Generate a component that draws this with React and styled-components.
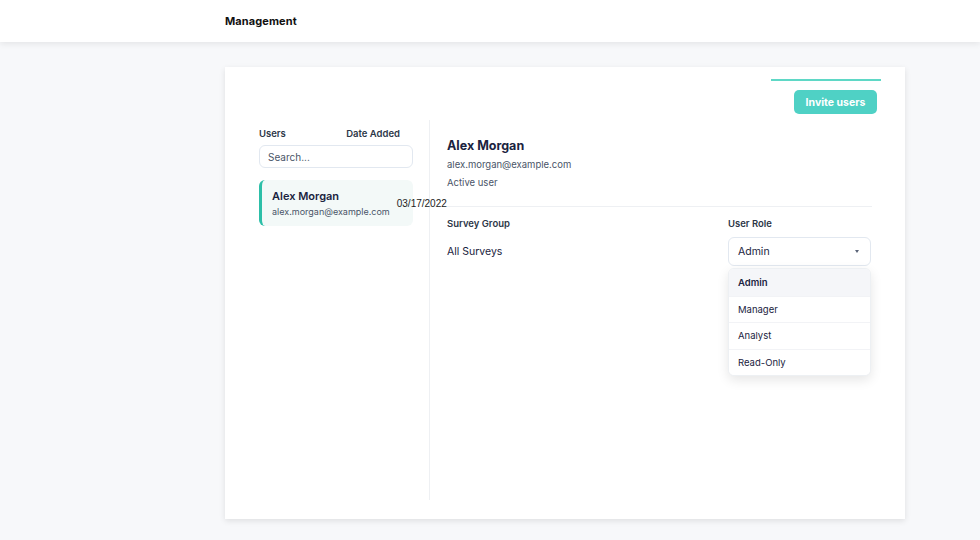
import styled, { createGlobalStyle } from "styled-components";

const GlobalStyle = createGlobalStyle`
    * { box-sizing: border-box; }
    body {
        margin: 0;
        background: #f7f8fa;
        font-family: Inter, "Noto Sans", sans-serif;
        color: #1a2340;
    }
`;

const Page = styled.div`
    width: 980px;
    height: 540px;
    overflow: hidden;
    background: #f7f8fa;
`;

const TopBar = styled.header`
    height: 42px;
    background: #fff;
    box-shadow: 0 2px 6px rgba(0, 0, 0, 0.08);
    display: flex;
    align-items: center;
    padding-left: 225px;
    h1 {
        margin: 0;
        font-size: 11px;
        font-weight: 700;
        color: #111;
        letter-spacing: 0.1px;
    }
`;

const Card = styled.section`
    margin: 25px 0 0 225px;
    width: 680px;
    height: 452px;
    background: #fff;
    box-shadow: 0 2px 6px rgba(0, 0, 0, 0.1);
    padding: 12px 24px 19px 34px;
    display: flex;
    flex-direction: column;
`;

const Actions = styled.div`
    display: flex;
    flex-direction: column;
    align-items: flex-end;
    height: 41px;
`;

const TabLine = styled.div`
    width: 110px;
    height: 2px;
    background: #5fd8c6;
`;

const InviteButton = styled.button`
    margin-top: 9px;
    margin-right: 4px;
    width: 83px;
    height: 24px;
    border: none;
    border-radius: 5px;
    background: #4fd1c5;
    color: #fff;
    font-family: Inter, sans-serif;
    font-size: 10.5px;
    font-weight: 700;
`;

const Body = styled.div`
    flex: 1;
    display: flex;
    max-height: 380px;
`;

const UserList = styled.div`
    width: 154px;
    padding-top: 8px;
    margin-right: 16px;
`;

const ListHead = styled.div`
    display: flex;
    justify-content: space-between;
    padding-right: 13px;
    font-size: 9.5px;
    font-weight: 600;
    color: #2d3748;
`;

const Search = styled.input`
    margin-top: 6px;
    width: 100%;
    height: 23px;
    border: 1px solid #e2e8f0;
    border-radius: 6px;
    padding: 0 8px;
    font-family: Inter, sans-serif;
    font-size: 10px;
    color: #2d3748;
    &::placeholder { color: #4a5568; }
`;

const UserItem = styled.div`
    margin-top: 12px;
    height: 46px;
    background: #f3f9f8;
    border-left: 3px solid ${props => (props.active ? "#2dbfa8" : "transparent")};
    border-radius: 6px;
    display: flex;
    align-items: center;
    padding-left: 10px;
    gap: 7px;
    white-space: nowrap;
`;

const ItemText = styled.div`
    display: flex;
    flex-direction: column;
    gap: 3px;
    margin-top: -1px;
    strong {
        font-size: 11px;
        font-weight: 600;
        color: #1a2340;
    }
    span {
        font-size: 9px;
        color: #4a5568;
    }
`;

const DateText = styled.span`
    position: relative;
    z-index: 1;
    font-family: "Liberation Sans", Arial, sans-serif;
    font-size: 10px;
    color: #222;
`;

const Detail = styled.div`
    flex: 1;
    border-left: 1px solid #eef0f3;
    padding: 18px 0 0 0;
`;

const Profile = styled.div`
    padding-left: 17px;
    padding-bottom: 12px;
    border-bottom: 1px solid #eef0f3;
    margin-right: 9px;
    h2 {
        margin: 0 0 5px;
        font-size: 12.5px;
        font-weight: 700;
        color: #1a2340;
    }
    p {
        margin: 0 0 4px;
        font-size: 9.5px;
        line-height: 14px;
        color: #4a5568;
    }
`;

const Settings = styled.div`
    display: flex;
    justify-content: space-between;
    padding: 11px 10px 0 17px;
`;

const Field = styled.div`
    width: ${props => props.width || "auto"};
    position: relative;
`;

const Label = styled.div`
    font-size: 9.5px;
    font-weight: 600;
    color: #2d3748;
    height: 12px;
`;

const Value = styled.div`
    margin-top: 15px;
    font-size: 10.5px;
    color: #1a2340;
`;

const Select = styled.div`
    margin-top: 7px;
    height: 29px;
    border: 1px solid #e2e8f0;
    border-radius: 6px;
    display: flex;
    align-items: center;
    justify-content: space-between;
    padding: 0 11px 0 9px;
    font-size: 10.5px;
    color: #1a2340;
`;

const Caret = styled.i`
    width: 0;
    height: 0;
    border-left: 2px solid transparent;
    border-right: 2px solid transparent;
    border-top: 3px solid #5a6478;
`;

const Menu = styled.ul`
    list-style: none;
    margin: 2px 0 0;
    padding: 0;
    border: 1px solid #edf0f3;
    border-radius: 6px;
    background: #fff;
    box-shadow: 0 4px 12px rgba(0, 0, 0, 0.1);
    overflow: hidden;
`;

const MenuItem = styled.li`
    height: 26.6px;
    display: flex;
    align-items: center;
    padding-left: 9px;
    font-size: 9.5px;
    font-weight: ${props => (props.selected ? 600 : 400)};
    color: #1a2340;
    background: ${props => (props.selected ? "#f5f6f9" : "#fff")};
    & + & { border-top: 1px solid #f2f3f6; }
`;

const roles = ["Admin", "Manager", "Analyst", "Read-Only"];

export default function App() {
    return (
        <Page>
            <GlobalStyle />
            <TopBar>
                <h1>Management</h1>
            </TopBar>
            <Card>
                <Actions>
                    <TabLine />
                    <InviteButton>Invite users</InviteButton>
                </Actions>
                <Body>
                    <UserList>
                        <ListHead>
                            <span>Users</span>
                            <span>Date Added</span>
                        </ListHead>
                        <Search placeholder="Search..." />
                        <UserItem active>
                            <ItemText>
                                <strong>Alex Morgan</strong>
                                <span>alex.morgan@example.com</span>
                            </ItemText>
                            <DateText>03/17/2022</DateText>
                        </UserItem>
                    </UserList>
                    <Detail>
                        <Profile>
                            <h2>Alex Morgan</h2>
                            <p>alex.morgan@example.com</p>
                            <p>Active user</p>
                        </Profile>
                        <Settings>
                            <Field>
                                <Label>Survey Group</Label>
                                <Value>All Surveys</Value>
                            </Field>
                            <Field width="143px">
                                <Label>User Role</Label>
                                <Select>
                                    Admin
                                    <Caret />
                                </Select>
                                <Menu>
                                    {roles.map(role => (
                                        <MenuItem key={role} selected={role === "Admin"}>
                                            {role}
                                        </MenuItem>
                                    ))}
                                </Menu>
                            </Field>
                        </Settings>
                    </Detail>
                </Body>
            </Card>
        </Page>
    );
}
